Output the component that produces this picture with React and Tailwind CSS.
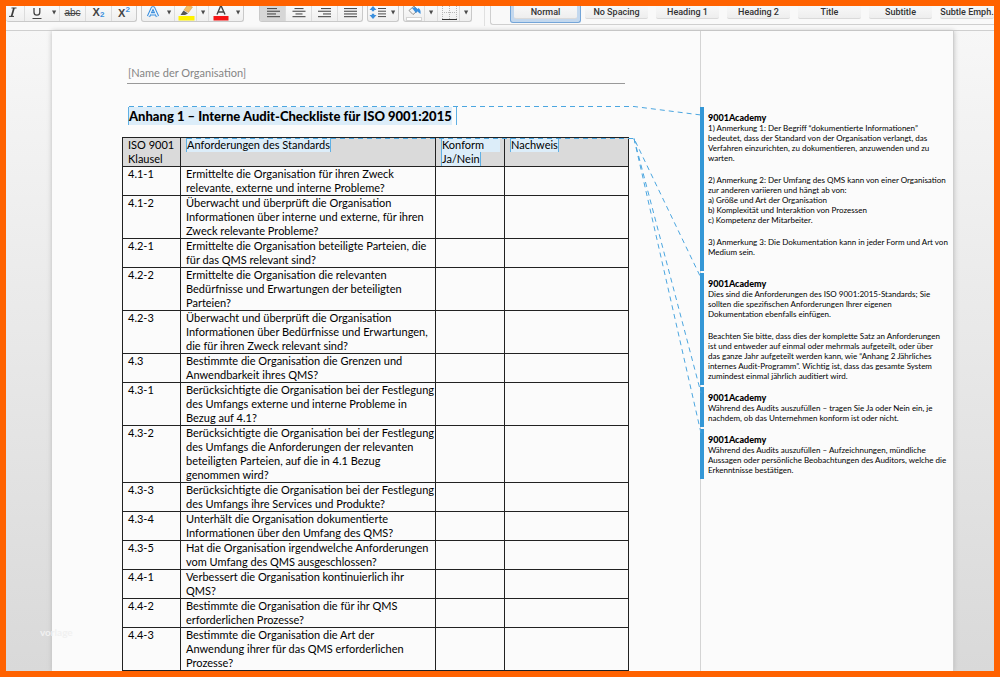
import clsx from 'clsx';

const styleNames = ['Normal', 'No Spacing', 'Heading 1', 'Heading 2', 'Title', 'Subtitle', 'Subtle Emph.'];

const rows = [
    ['4.1-1', 'Ermittelte die Organisation für ihren Zweck\nrelevante, externe und interne Probleme?'],
    ['4.1-2', 'Überwacht und überprüft die Organisation\nInformationen über interne und externe, für ihren\nZweck relevante Probleme?'],
    ['4.2-1', 'Ermittelte die Organisation beteiligte Parteien, die\nfür das QMS relevant sind?'],
    ['4.2-2', 'Ermittelte die Organisation die relevanten\nBedürfnisse und Erwartungen der beteiligten\nParteien?'],
    ['4.2-3', 'Überwacht und überprüft die Organisation\nInformationen über Bedürfnisse und Erwartungen,\ndie für ihren Zweck relevant sind?'],
    ['4.3', 'Bestimmte die Organisation die Grenzen und\nAnwendbarkeit ihres QMS?'],
    ['4.3-1', 'Berücksichtigte die Organisation bei der Festlegung\ndes Umfangs externe und interne Probleme in\nBezug auf 4.1?'],
    ['4.3-2', 'Berücksichtigte die Organisation bei der Festlegung\ndes Umfangs die Anforderungen der relevanten\nbeteiligten Parteien, auf die in 4.1 Bezug\ngenommen wird?'],
    ['4.3-3', 'Berücksichtigte die Organisation bei der Festlegung\ndes Umfangs ihre Services und Produkte?'],
    ['4.3-4', 'Unterhält die Organisation dokumentierte\nInformationen über den Umfang des QMS?'],
    ['4.3-5', 'Hat die Organisation irgendwelche Anforderungen\nvom Umfang des QMS ausgeschlossen?'],
    ['4.4-1', 'Verbessert die Organisation kontinuierlich ihr\nQMS?'],
    ['4.4-2', 'Bestimmte die Organisation die für ihr QMS\nerforderlichen Prozesse?'],
    ['4.4-3', 'Bestimmte die Organisation die Art der\nAnwendung ihrer für das QMS erforderlichen\nProzesse?'],
];

const comments = [
    {
        trailing: true,
        paragraphs: [
            '1) Anmerkung 1: Der Begriff “dokumentierte Informationen”\nbedeutet, dass der Standard von der Organisation verlangt, das\nVerfahren einzurichten, zu dokumentieren, anzuwenden und zu\nwarten.',
            '2) Anmerkung 2: Der Umfang des QMS kann von einer Organisation\nzur anderen variieren und hängt ab von:\na) Größe und Art der Organisation\nb) Komplexität und Interaktion von Prozessen\nc) Kompetenz der Mitarbeiter.',
            '3) Anmerkung 3: Die Dokumentation kann in jeder Form und Art von\nMedium sein.',
        ],
    },
    {
        paragraphs: [
            'Dies sind die Anforderungen des ISO 9001:2015-Standards; Sie\nsollten die spezifischen Anforderungen Ihrer eigenen\nDokumentation ebenfalls einfügen.',
            'Beachten Sie bitte, dass dies der komplette Satz an Anforderungen\nist und entweder auf einmal oder mehrmals aufgeteilt, oder über\ndas ganze Jahr aufgeteilt werden kann, wie “Anhang 2 Jährliches\ninternes Audit-Programm”. Wichtig ist, dass das gesamte System\nzumindest einmal jährlich auditiert wird.',
        ],
    },
    {
        paragraphs: ['Während des Audits auszufüllen – tragen Sie Ja oder Nein ein, je\nnachdem, ob das Unternehmen konform ist oder nicht.'],
    },
    {
        paragraphs: ['Während des Audits auszufüllen – Aufzeichnungen, mündliche\nAussagen oder persönliche Beobachtungen des Auditors, welche die\nErkenntnisse bestätigen.'],
    },
];

const Group = ({ className, children }) => (
    <div className={clsx('flex h-4 shrink-0 overflow-hidden rounded-b-[3px] border-b border-[#c9c9c9] bg-linear-to-b from-[#fafafa] to-[#efefef]', className)}>
        {children}
    </div>
);

const Tool = ({ label, className, children }) => (
    <button type="button" aria-label={label} className={clsx('flex h-4 shrink-0 items-start justify-center border-[#dcdcdc]', className)}>
        {children}
    </button>
);

const Arrow = ({ label, className }) => (
    <Tool label={label} className={className}>
        <svg width="6" height="16" viewBox="0 0 6 16">
            <path d="M1 4.500h4.200L3.100 8.500z" fill="#4a4a4a" />
        </svg>
    </Tool>
);

const Lines = ({ widths, align }) => (
    <svg width="14" height="16" viewBox="0 0 14 16">
        {widths.map((w, i) => (
            <rect key={i} x={align === 'right' ? 13 - w : align === 'center' ? 7 - w / 2 : 1} y={2 + i * 2.7} width={w} height="1.100" fill="#4d4d4d" />
        ))}
    </svg>
);

const Ribbon = () => (
    <header className="flex h-[25px] shrink-0 items-start overflow-hidden border-b border-[#cfcfcf] bg-[#f9f9f9]">
        <Group className="border-r">
            <Tool label="Kursiv" className="w-[19px] border-r pr-1">
                <svg width="12" height="16" viewBox="0 0 12 16" fill="none" stroke="#3c3c3c">
                    <path d="M4.500 2h5M2 10.400h5" strokeWidth="1" />
                    <path d="M7 2L4.500 10.400" strokeWidth="1.700" />
                </svg>
            </Tool>
            <Tool label="Unterstrichen" className="w-6">
                <svg width="12" height="16" viewBox="0 0 12 16" fill="none" stroke="#444">
                    <path d="M3 2v4.200a2.900 2.900 0 0 0 5.800 0V2" strokeWidth="1.300" />
                    <path d="M1.500 12.500h9" strokeWidth="1" />
                </svg>
            </Tool>
            <Arrow label="Unterstreichungsart" className="w-[11px] border-r" />
            <Tool label="Durchgestrichen" className="w-[26px] border-r font-[Liberation_Sans] text-[10px]/[13px] text-[#444] line-through">abc</Tool>
            <Tool label="Tiefgestellt" className="w-[26px] border-r font-[Liberation_Sans] text-[11px]/[12px] font-bold text-[#444]">
                X<span className="pt-1 text-[8px]/[10px] text-[#3b8fdd]">2</span>
            </Tool>
            <Tool label="Hochgestellt" className="w-6 font-[Liberation_Sans] text-[11px]/[14px] font-bold text-[#444]">
                X<span className="text-[8px]/[7px] text-[#3b8fdd]">2</span>
            </Tool>
        </Group>

        <Group className="ml-1 border-x">
            <Tool label="Texteffekte" className="w-[21px] pl-px">
                <svg width="14" height="16" viewBox="0 0 14 16" fill="none">
                    <path d="M2.500 10.500L6.400 2h1.200l3.900 8.500M4.500 7.800h5" stroke="#3b8fdd" strokeWidth="3.400" strokeLinejoin="round" />
                    <path d="M2.500 10.500L6.400 2h1.200l3.900 8.500M4.500 7.800h5" stroke="#f4f8fc" strokeWidth="1.300" />
                </svg>
            </Tool>
            <Arrow label="Texteffekte wählen" className="w-[12px] border-r" />
            <Tool label="Texthervorhebung" className="w-[22px] border-r">
                <svg width="18" height="16" viewBox="0 0 18 16">
                    <path d="M7 4L10.500-1l5 2-4 5.500z" fill="#f3bd62" stroke="#c79646" strokeWidth=".5" />
                    <path d="M6.500 4.500l4.500 3-3 1.500H3.500z" fill="#555" />
                    <rect x="1.500" y="10" width="16" height="4.500" fill="#fff200" />
                </svg>
            </Tool>
            <Arrow label="Hervorhebungsfarbe" className="w-3 border-r" />
            <Tool label="Schriftfarbe" className="w-6">
                <svg width="18" height="16" viewBox="0 0 18 16">
                    <path d="M5 8.500L8.400.5h1L13 8.500M6.200 6h5.500" fill="none" stroke="#444" strokeWidth="1.400" />
                    <rect x="1.500" y="10" width="15" height="4.500" fill="#f51414" />
                </svg>
            </Tool>
            <Arrow label="Schriftfarbe wählen" className="w-[10px]" />
        </Group>

        <Group className="ml-[15px] border-x">
            <Tool label="Linksbündig" className="w-[26px] border-r bg-[#d6d6d6]"><Lines widths={[10, 13, 9, 13]} /></Tool>
            <Tool label="Zentriert" className="w-[26px] border-r"><Lines widths={[9, 13, 7, 13]} align="center" /></Tool>
            <Tool label="Rechtsbündig" className="w-[26px] border-r"><Lines widths={[10, 13, 8, 13]} align="right" /></Tool>
            <Tool label="Blocksatz" className="w-6"><Lines widths={[13, 13, 13, 13]} /></Tool>
        </Group>

        <Group className="ml-1 border-x">
            <Tool label="Zeilenabstand" className="w-[20px]">
                <svg width="18" height="16" viewBox="0 0 18 16">
                    <path d="M4 0l3.500 4H5.200v1.200H2.800V4H.5zM4 13L.5 9h2.300V7.800h2.400V9h2.300z" fill="#3b8fdd" />
                    <path d="M9 2.500h8M9 5.200h8M9 7.900h8M9 10.600h8" stroke="#4d4d4d" />
                </svg>
            </Tool>
            <Arrow label="Zeilenabstand wählen" className="w-[10px]" />
        </Group>

        <Group className="ml-1 border-x">
            <Tool label="Schattierung" className="w-[21px] border-r">
                <svg width="18" height="16" viewBox="0 0 18 16">
                    <path d="M4 4.500L9 0l4 4.500-5 4z" fill="#f4f4f4" stroke="#777" strokeWidth=".8" />
                    <path d="M7 2l4 5 3-3L10 1z" fill="#3b8fdd" />
                    <path d="M13 2c2 1 3 2.500 2.500 6L13 6z" fill="#3b8fdd" />
                    <rect x="1.500" y="11.500" width="15" height="3" fill="#fff" stroke="#d4d4d4" />
                </svg>
            </Tool>
            <Arrow label="Schattierungsfarbe" className="w-[13px] border-r" />
            <Tool label="Rahmen" className="w-[22px] border-r">
                <svg width="18" height="16" viewBox="0 0 18 16" fill="none">
                    <path d="M2.500 0v13M9.500 0v13M16.500 0v13M2 6.500h15" stroke="#b5b5b5" strokeDasharray="1 1" />
                    <path d="M2 13.500h15" stroke="#333" />
                </svg>
            </Tool>
            <Arrow label="Rahmenart" className="w-[11px]" />
        </Group>

        <div className="ml-3 h-5 w-px shrink-0 bg-[#e0e0e0]" />

        {/* Style gallery */}
        <div className="ml-[5px] flex h-[19px] min-w-0 flex-1 items-start overflow-hidden rounded-bl-[3px] border-b border-l border-[#cfcfcf] pl-[19px]">
            {styleNames.map((name, i) => (
                <div
                    key={name}
                    className={clsx(
                        'h-[17px] w-[71px]',
                        i < styleNames.length - 1 ? 'shrink-0' : 'min-w-0 shrink',
                        i === 0 ? 'rounded-b-[3px] border-x border-b border-[#74a5d8] bg-[#c3d8ee] px-[3px]' : i < styleNames.length - 1 ? 'px-1' : 'pl-1'
                    )}
                >
                    <button type="button" className="block h-[13px] w-full rounded-b-[2px] border-b border-[#dadada] bg-linear-to-b from-[#f8f8f8] to-[#eeeeee] text-center font-[Roboto] text-[9px]/[13px] font-medium whitespace-nowrap text-[#333]">
                        {name}
                    </button>
                </div>
            ))}
        </div>
    </header>
);

const Mark = ({ children }) => (
    <span className="inline-block border-x border-[#5fb0e4] bg-[#dcedf9]">{children}</span>
);

const cell = 'border border-[#222] pl-[5px] py-0 text-left align-top font-normal whitespace-pre-line';

const AuditTable = () => (
    <table className="w-full table-fixed border-collapse text-[11px]/[14px]">
        <colgroup>
            <col className="w-[58px]" />
            <col />
            <col className="w-[69px]" />
            <col className="w-[124px]" />
        </colgroup>
        <thead>
            <tr className="bg-[#dadada]">
                <th scope="col" className={cell}>{'ISO 9001\nKlausel'}</th>
                <th scope="col" className={cell}><Mark>Anforderungen des Standards</Mark></th>
                <th scope="col" className={clsx(cell, 'pr-1')}>
                    <div className="border-l border-[#5fb0e4] bg-[#dcedf9]">Konform</div>
                    <Mark>Ja/Nein</Mark>
                </th>
                <th scope="col" className={cell}><Mark>Nachweis</Mark></th>
            </tr>
        </thead>
        <tbody>
            {rows.map(([clause, text]) => (
                <tr key={clause}>
                    <td className={cell}>{clause}</td>
                    <td className={cell}>{text}</td>
                    <td className={cell} />
                    <td className={cell} />
                </tr>
            ))}
        </tbody>
    </table>
);

const Comment = ({ paragraphs, trailing }) => (
    <article className={clsx('-ml-px border-l-4 border-[#3497d6] pt-[6px] pl-1', trailing ? 'pb-[14px]' : 'pb-1')}>
        <h2 className="text-[9px]/[10px] font-black">9001Academy</h2>
        <div className="flex flex-col gap-3 text-[8px]/[10px] whitespace-pre">
            {paragraphs.map((p) => (
                <p key={p}>{p}</p>
            ))}
        </div>
    </article>
);

// Dashed leaders that tie the marked text to its comment
const Leaders = () => (
    <svg className="pointer-events-none absolute top-0 left-0 h-full w-full" fill="none" stroke="#4ba6e0" strokeDasharray="5 4">
        <path d="M77 75.500H582L649 84" />
        <path d="M135 107.500H582L649 247" />
        <path d="M582 107.500L649 362" />
        <path d="M582 107.500L649 402" />
    </svg>
);

export default function App() {
    return (
        <div className="flex h-screen flex-col overflow-hidden border-6 border-[#ff6200] bg-[#f9f9f9] font-[Lato,sans-serif] text-black">
            <Ribbon />
            <div className="relative flex min-h-0 flex-1 bg-linear-to-b from-[#f7f7f7] to-[#d9d9d9] pr-10 pl-[46px]">
                <div className="relative flex min-w-0 flex-1 overflow-hidden border-r border-[#cfcfcf] bg-[#fbfbfb] shadow-[0_0_5px_#bbbbbb]">
                    <main className="min-w-0 flex-1 pt-[34px] pr-[71px] pl-[70px]">
                        <div className="mr-1 ml-[5px] border-b border-[#999] pb-[3px] pl-px text-[11px]/[15px] text-[#858585]">[Name der Organisation]</div>
                        <h1 className="mt-[23px] mb-3 ml-[6px] flex text-[13px]/[18px] font-black whitespace-nowrap">
                            <span className="border-l border-[#5fb0e4] bg-[#dcedf9]">Anhang 1 – Interne Audit-Checkliste für ISO 9001:2015</span>
                            <span className="ml-1 w-px bg-[#5fb0e4]" />
                        </h1>
                        <AuditTable />
                    </main>
                    <aside className="flex w-[253px] shrink-0 flex-col gap-[2px] border-l border-[#d4d4d4] pt-[76px]">
                        {comments.map((c, i) => (
                            <Comment key={i} {...c} />
                        ))}
                    </aside>
                    <Leaders />
                </div>
                <div className="absolute bottom-8 left-[34px] text-[10px]/[14px] font-bold text-[#f1f1f1]">vorlage</div>
            </div>
        </div>
    );
}
